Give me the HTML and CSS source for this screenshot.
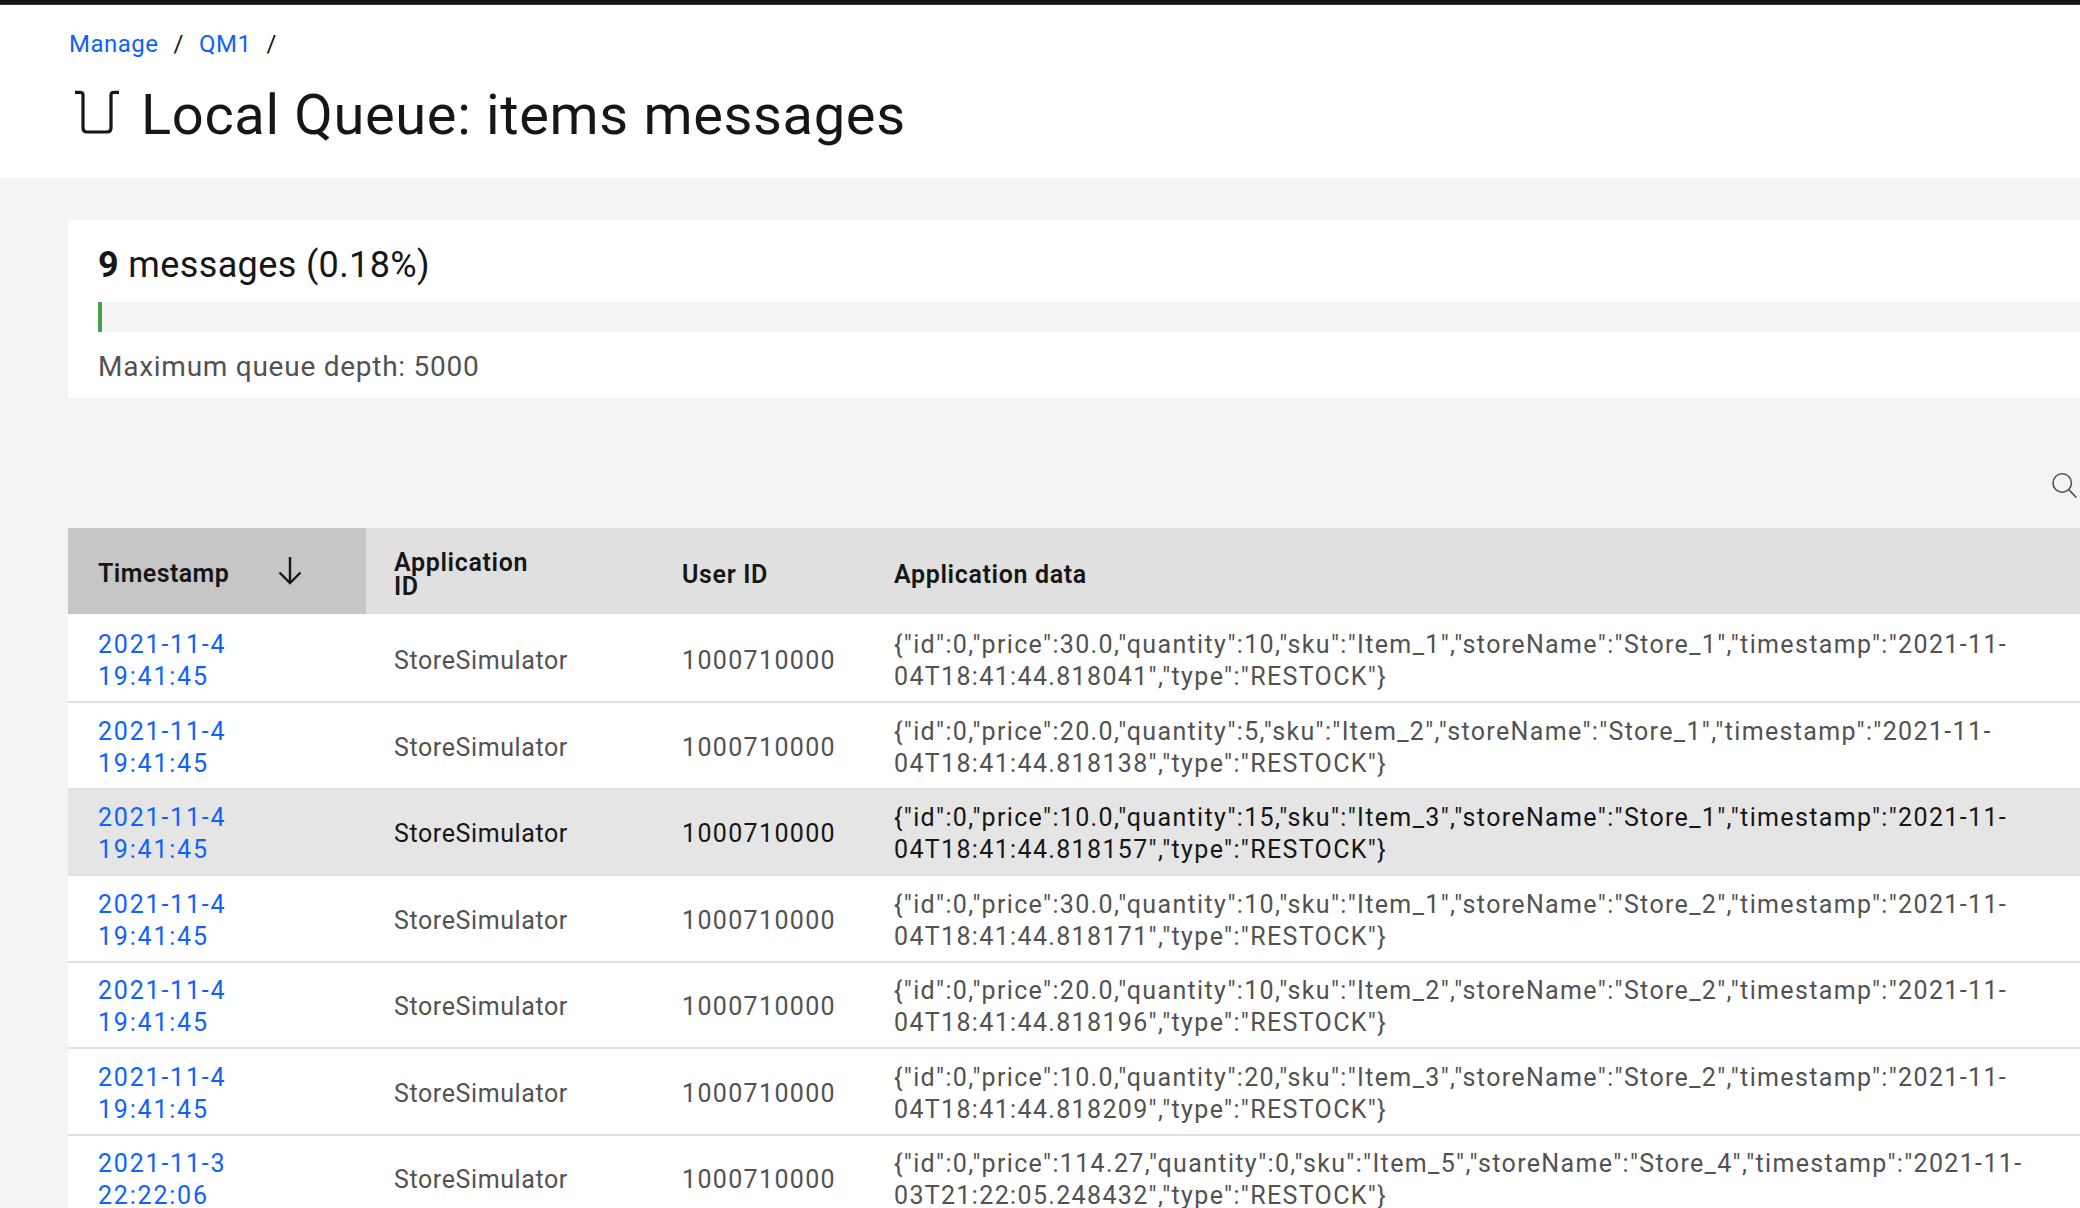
FILE: index.html
```html
<!DOCTYPE html>
<html lang="en">
<head>
<meta charset="UTF-8" />
<title>Local Queue: items messages</title>
<link rel="stylesheet" href="styles.css">
</head>
<body>
<div class="topbar"></div>
<header class="page-header">
  <nav class="crumbs">
    <a href="#">Manage</a><span class="sep">/</span><a href="#">QM1</a><span class="sep">/</span>
  </nav>
  <h1 class="title">
    <svg class="queue-icon" viewBox="0 0 44 44" fill="none" stroke="#161616" stroke-width="3.2">
      <path d="M0 2.3H5Q8 2.3 8 5V38Q8 42 12 42H32Q36 42 36 38V5Q36 2.3 39 2.3H44" />
    </svg>
    Local Queue: items messages
  </h1>
</header>
<main class="content">
  <section class="depth-card">
    <div class="depth-count"><b>9</b> messages (0.18%)</div>
    <div class="depth-track"><div class="depth-fill"></div></div>
    <div class="depth-max">Maximum queue depth: 5000</div>
  </section>
  <div class="toolbar">
    <svg class="search-icon" viewBox="0 0 25 25" fill="none" stroke="#525252" stroke-width="1.6">
      <circle cx="10.2" cy="10" r="9.2" />
      <path d="M16.8 16.6L24.4 24.6" />
    </svg>
  </div>
  <table class="messages">
    <colgroup>
      <col class="col-time"><col class="col-app"><col class="col-user"><col>
    </colgroup>
    <thead>
      <tr>
        <th class="sorted">
          <div class="sort-head">Timestamp
            <svg class="sort-icon" viewBox="0 0 24 28" fill="none" stroke="#161616" stroke-width="2.4">
              <path d="M12 0V26M1.5 15.5L12 26L22.5 15.5" />
            </svg>
          </div>
        </th>
        <th>Application<br>ID</th>
        <th>User ID</th>
        <th>Application data</th>
      </tr>
    </thead>
    <tbody>
      <tr>
        <td class="time"><a href="#">2021-11-4<br>19:41:45</a></td>
        <td class="app">StoreSimulator</td>
        <td>1000710000</td>
        <td>{"id":0,"price":30.0,"quantity":10,"sku":"Item_1","storeName":"Store_1","timestamp":"2021-11-<br>04T18:41:44.818041","type":"RESTOCK"}</td>
      </tr>
      <tr>
        <td class="time"><a href="#">2021-11-4<br>19:41:45</a></td>
        <td class="app">StoreSimulator</td>
        <td>1000710000</td>
        <td>{"id":0,"price":20.0,"quantity":5,"sku":"Item_2","storeName":"Store_1","timestamp":"2021-11-<br>04T18:41:44.818138","type":"RESTOCK"}</td>
      </tr>
      <tr class="hovered">
        <td class="time"><a href="#">2021-11-4<br>19:41:45</a></td>
        <td class="app">StoreSimulator</td>
        <td>1000710000</td>
        <td>{"id":0,"price":10.0,"quantity":15,"sku":"Item_3","storeName":"Store_1","timestamp":"2021-11-<br>04T18:41:44.818157","type":"RESTOCK"}</td>
      </tr>
      <tr>
        <td class="time"><a href="#">2021-11-4<br>19:41:45</a></td>
        <td class="app">StoreSimulator</td>
        <td>1000710000</td>
        <td>{"id":0,"price":30.0,"quantity":10,"sku":"Item_1","storeName":"Store_2","timestamp":"2021-11-<br>04T18:41:44.818171","type":"RESTOCK"}</td>
      </tr>
      <tr>
        <td class="time"><a href="#">2021-11-4<br>19:41:45</a></td>
        <td class="app">StoreSimulator</td>
        <td>1000710000</td>
        <td>{"id":0,"price":20.0,"quantity":10,"sku":"Item_2","storeName":"Store_2","timestamp":"2021-11-<br>04T18:41:44.818196","type":"RESTOCK"}</td>
      </tr>
      <tr>
        <td class="time"><a href="#">2021-11-4<br>19:41:45</a></td>
        <td class="app">StoreSimulator</td>
        <td>1000710000</td>
        <td>{"id":0,"price":10.0,"quantity":20,"sku":"Item_3","storeName":"Store_2","timestamp":"2021-11-<br>04T18:41:44.818209","type":"RESTOCK"}</td>
      </tr>
      <tr>
        <td class="time"><a href="#">2021-11-3<br>22:22:06</a></td>
        <td class="app">StoreSimulator</td>
        <td>1000710000</td>
        <td>{"id":0,"price":114.27,"quantity":0,"sku":"Item_5","storeName":"Store_4","timestamp":"2021-11-<br>03T21:22:05.248432","type":"RESTOCK"}</td>
      </tr>
    </tbody>
  </table>
</main>
</body>
</html>
```

FILE: styles.css
```css
html, body {
  height: 100%;
}
body {
  margin: 0;
  font-family: Roboto, "Noto Sans", sans-serif;
  background: #f4f4f4;
  color: #161616;
  overflow: hidden;
}
a {
  color: #0f62fe;
  text-decoration: none;
}
.topbar {
  height: 4px;
  background: #161616;
  border-bottom: 1px solid #393939;
}
.page-header {
  height: 173px;
  box-sizing: border-box;
  padding: 24px 0 0 69px;
  background: #fff;
}
.crumbs {
  font-size: 24px;
  line-height: 30px;
  letter-spacing: 0.5px;
}
.sep {
  margin: 0 15px;
}
.title {
  display: flex;
  align-items: center;
  gap: 22px;
  margin: 21px 0 0 6px;
  font-size: 56px;
  line-height: 70px;
  font-weight: 400;
  letter-spacing: 0.65px;
}
.queue-icon {
  width: 44px;
  height: 44px;
  margin-top: -7px;
}
.content {
  padding: 42px 0 0 68px;
}
.depth-card {
  height: 178px;
  box-sizing: border-box;
  padding: 24px 0 0 30px;
  background: #fff;
}
.depth-count {
  font-size: 36px;
  line-height: 42px;
  letter-spacing: 0.37px;
}
.depth-track {
  height: 30px;
  margin: 16px 0 0 0;
  background: #f4f4f4;
}
.depth-fill {
  width: 4px;
  height: 100%;
  background: #4a9e52;
}
.depth-max {
  margin-top: 18px;
  font-size: 28px;
  line-height: 34px;
  color: #525252;
  letter-spacing: 0.74px;
}
.toolbar {
  display: flex;
  justify-content: flex-end;
  align-items: flex-start;
  height: 130px;
  box-sizing: border-box;
  padding: 75px 3px 0 0;
}
.search-icon {
  width: 25px;
  height: 25px;
}
.messages {
  width: 100%;
  table-layout: fixed;
  border-collapse: collapse;
}
.col-time { width: 298px; }
.col-app { width: 288px; }
.col-user { width: 212px; }
.messages th {
  height: 86px;
  box-sizing: border-box;
  padding: 7px 28px 0;
  background: #e0e0e0;
  text-align: left;
  font-size: 25px;
  line-height: 24px;
  font-weight: 600;
  letter-spacing: 0.65px;
}
.messages th.sorted {
  padding: 0 0 0 30px;
  background: #c6c6c6;
  letter-spacing: 0.4px;
}
.sort-head {
  display: flex;
  align-items: center;
  gap: 49px;
  padding-top: 6px;
}
.sort-icon {
  width: 24px;
  height: 28px;
  margin-top: -6px;
}
.messages td {
  height: 86.5px;
  box-sizing: border-box;
  padding: 5px 0 0 28px;
  background: #fff;
  border-bottom: 2px solid #e0e0e0;
  font-size: 25px;
  line-height: 32px;
  color: #525252;
  white-space: nowrap;
  overflow: hidden;
  letter-spacing: 1.35px;
}
.messages tbody tr:first-child td {
  height: 88px;
  padding-top: 7.5px;
}
.messages td.time {
  padding-left: 30px;
  letter-spacing: 1.8px;
}
.messages td.app {
  letter-spacing: 0.6px;
}
.messages tr.hovered td {
  background: #e5e5e5;
  color: #161616;
}
```
